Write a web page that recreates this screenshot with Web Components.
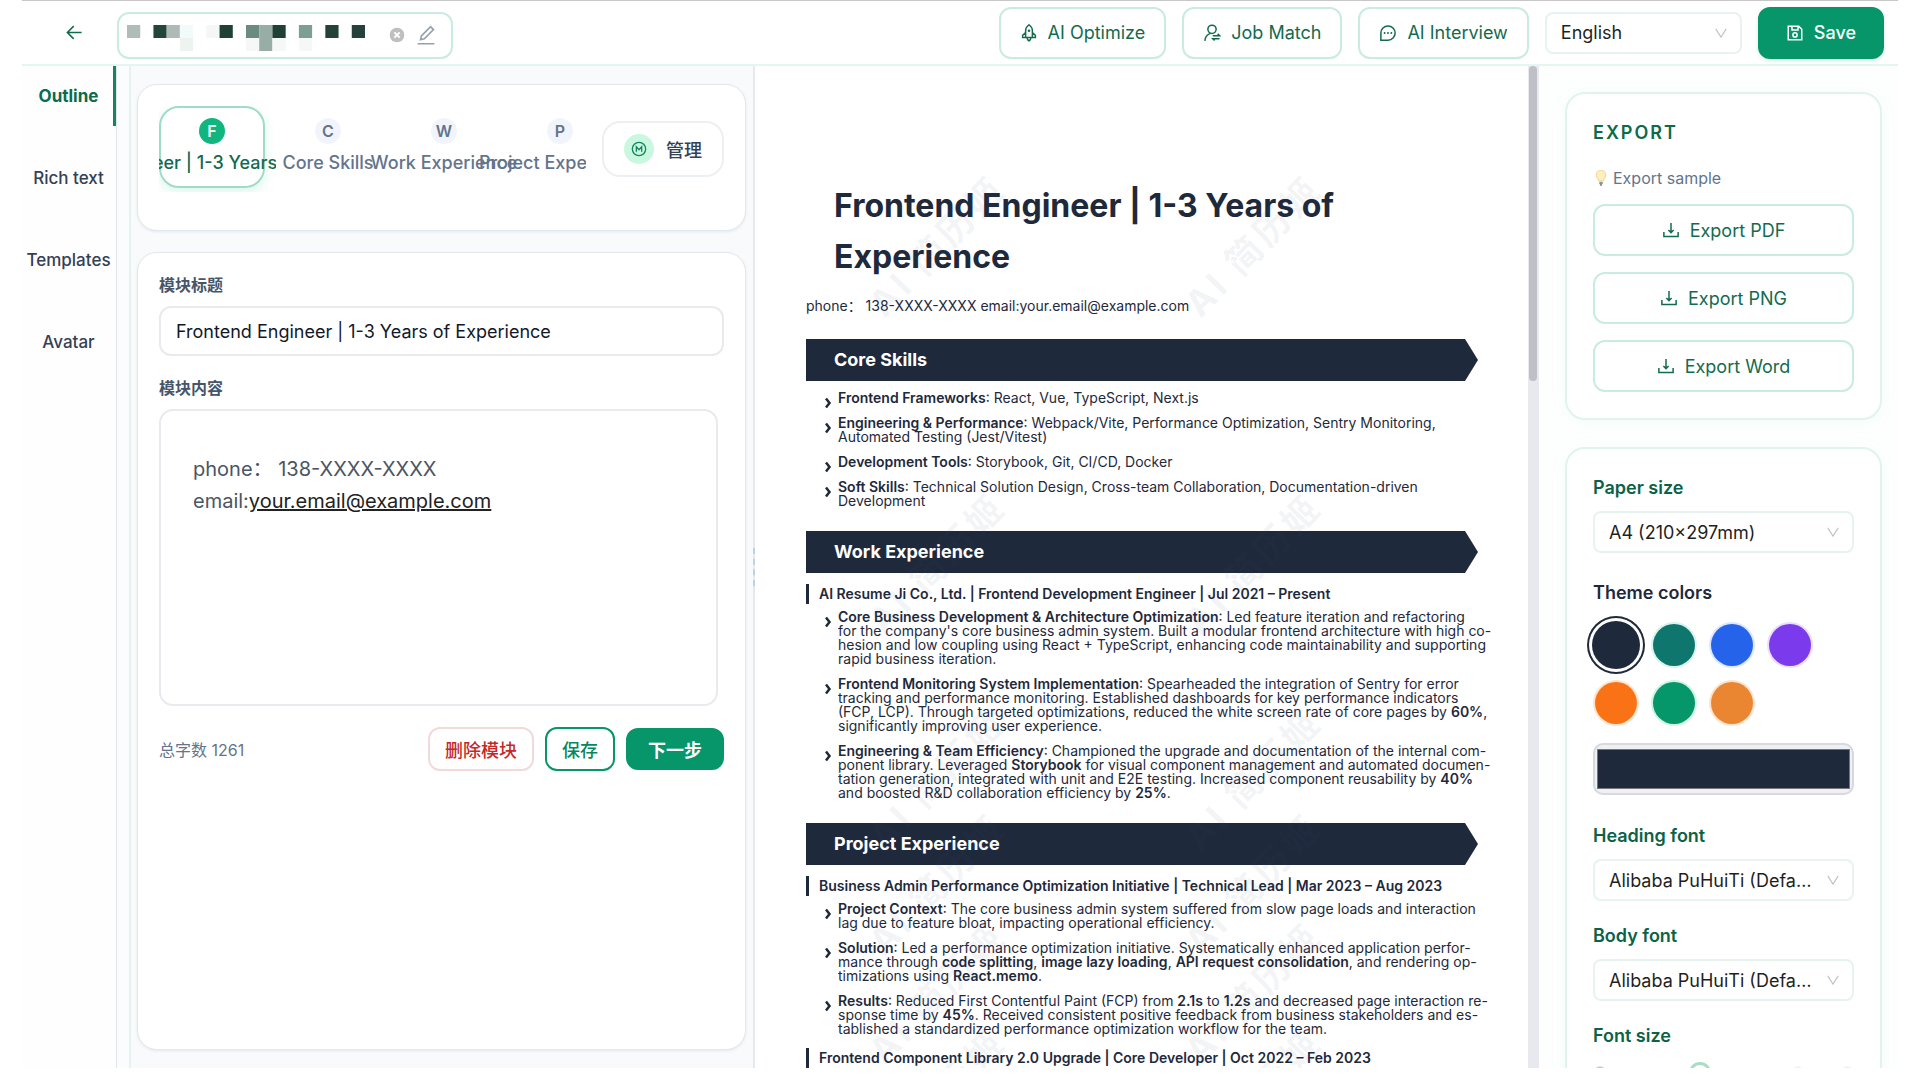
<!DOCTYPE html>
<html lang="en">
<head>
<meta charset="utf-8">
<title>AI Resume Editor</title>
<style>
  body {
    margin: 0;
    background: #fff;
    color: #1e293b;
    font-family: Inter, "Noto Sans CJK SC", sans-serif;
    font-size: 18px;
    overflow: hidden;
  }
</style>
</head>
<body>
<resume-app></resume-app>

<script>
const ICONS = {
  back: '<path d="M21 12H4M11 4l-8 8 8 8"/>',
  rocket: '<path d="M7.500 18V8.500C7.500 5 10 2.500 12 1c2 1.500 4.500 4 4.500 7.500V18zM7.500 11.500 3.500 15v3h17v-3l-4-3.500M9.500 18c0 3 1 3.500 2.500 4.500 1.500-1 2.500-1.500 2.500-4.500"/><circle cx="12" cy="9" r=".8"/>',
  match: '<circle cx="12" cy="7" r="5.500"/><path d="M2.500 22.500c.3-5 3-8.500 7.500-10M13 15.500h9l-2.500-2.500M22 19.500h-9l2.500 2.500"/>',
  chat: '<path d="M2.500 21.500v-9.500a9.500 9.500 0 1 1 9.500 9.500z"/><path stroke-width="2.600" stroke-linecap="round" d="M7.500 12h.01M12 12h.01M16.500 12h.01"/>',
  save: '<path d="M3 3h14l4 4v14H3zM8 3v5h8V3"/><circle cx="12" cy="14.500" r="2.800"/>',
  download: '<path d="M2.500 14.500v6h19v-6M12 2.500V15M8.500 12l3.500 3.500 3.500-3.500"/>',
  edit: '<path d="M2 22.500h20M5.500 17.500l1-4.500L17.500 2l3.500 3.500L10 16.500z"/>',
  clear: '<circle cx="12" cy="12" r="11" fill="currentColor" stroke="none"/><path stroke="#fff" d="M8 8l8 8M16 8l-8 8"/>',
  manage: '<circle cx="12" cy="12" r="10"/><path d="M8 16V8.500l4 4.500 4-4.500V16"/>',
  bulb: '<path fill="#fdf0c0" stroke="#f2dda0" d="M8.500 16c0-3-3.500-4-3.500-8.500a7 7 0 0 1 14 0c0 4.500-3.500 5.500-3.500 8.500z"/><path stroke="#8b8f96" d="M9.500 18.500h5M9.500 20.500h5M10.500 22.500h3"/>',
  down: '<path d="M3 5l9 14 9-14"/>',
  chevron: '<path d="M8 3l7 9-7 9"/>'
};

class AppIcon extends HTMLElement {
  connectedCallback() {
    const size = this.getAttribute('size') || 20;
    const weight = this.getAttribute('weight') || 2;
    this.attachShadow({ mode: 'open' });
    this.shadowRoot.innerHTML = `
      <style>
        :host { display: inline-flex; flex: none; }
        svg { display: block; fill: none; stroke: currentColor; }
      </style>
      <svg width="${size}" height="${size}" viewBox="0 0 24 24" stroke-width="${weight}" aria-hidden="true">${ICONS[this.getAttribute('name')]}</svg>
    `;
  }
}
customElements.define('app-icon', AppIcon);

class ToolButton extends HTMLElement {
  connectedCallback() {
    this.attachShadow({ mode: 'open' });
    this.shadowRoot.innerHTML = `
      <style>
        :host { display: block; }
        button {
          display: flex;
          align-items: center;
          justify-content: center;
          gap: 10px;
          width: 100%;
          height: 52px;
          padding: 0 19px;
          border: 2px solid #c9ecdf;
          border-radius: 12px;
          background: #fff;
          color: #136b4f;
          font: inherit;
          white-space: nowrap;
        }
        :host([primary]) button {
          border-color: #079669;
          background: #079669;
          color: #fff;
          padding: 0 26px;
          font-weight: 500;
          box-shadow: 0 2px 4px rgba(5, 150, 105, .15);
        }
      </style>
      <button type="button"><app-icon name="${this.getAttribute('icon')}" size="18"></app-icon><slot></slot></button>
    `;
  }
}
customElements.define('tool-button', ToolButton);

class SelectField extends HTMLElement {
  connectedCallback() {
    const label = this.getAttribute('label');
    this.attachShadow({ mode: 'open' });
    this.shadowRoot.innerHTML = `
      <style>
        :host { display: block; }
        label { display: block; margin-bottom: 10px; color: #0b6247; font-weight: 600; line-height: 26px; }
        .box { display: grid; align-items: center; }
        .box > * { grid-area: 1 / 1; }
        app-icon { justify-self: end; margin-right: 14px; color: #bfc3c8; pointer-events: none; }
        select {
          appearance: none;
          width: 100%;
          min-width: 0;
          height: 42px;
          padding: 0 38px 0 14px;
          border: 2px solid #e6f3ee;
          border-radius: 8px;
          background: #fff;
          color: #1f1f1f;
          font: inherit;
          text-overflow: ellipsis;
          white-space: nowrap;
          overflow: hidden;
        }
      </style>
      ${label ? `<label for="field">${label}</label>` : ''}
      <div class="box">
        <select id="field" ${label ? '' : 'aria-label="Language"'}><option>${this.getAttribute('value')}</option></select>
        <app-icon name="down" size="14"></app-icon>
      </div>
    `;
  }
}
customElements.define('select-field', SelectField);

class MaskedName extends HTMLElement {
  connectedCallback() {
    // [column, row, colour] on a 13px mosaic
    const cells = [
      [0, 0, '#b0bcb8'], [2, 0, '#24453b'], [3, 0, '#adbab6'], [4, 0, '#f0fbfa'], [4, 1, '#edf3f1'],
      [6, 0, '#f5f6f6'], [7, 0, '#1f4135'], [9, 0, '#6b8a80'], [10, 0, '#97ada5'], [11, 0, '#1f4135'],
      [9, 1, '#f6f7f7'], [10, 1, '#97ada5'], [11, 1, '#f6f7f7'], [13, 0, '#7d9e94'], [13, 1, '#f6f7f7'],
      [15, 0, '#24423a'], [17, 0, '#24423a']
    ];
    this.attachShadow({ mode: 'open' });
    this.shadowRoot.innerHTML = `
      <style>
        :host {
          display: flex;
          align-items: center;
          box-sizing: border-box;
          width: 336px;
          height: 47px;
          padding: 0 8px;
          border: 2px solid #c9ecdf;
          border-radius: 12px;
        }
        .mosaic { flex: none; margin: 6px 24px 0 0; }
        button { display: flex; padding: 0; border: 0; background: none; color: #bfbfbf; }
        button + button { margin-left: 11px; color: #94a0ae; }
      </style>
      <svg class="mosaic" width="238" height="26" viewBox="0 0 234 26" preserveAspectRatio="none" role="img" aria-label="Resume name">
        ${cells.map(([x, y, c]) => `<rect x="${x * 13}" y="${y * 13}" width="13" height="13" fill="${c}"/>`).join('')}
      </svg>
      <button type="button" aria-label="Clear"><app-icon name="clear" size="16" weight="3"></app-icon></button>
      <button type="button" aria-label="Rename"><app-icon name="edit" size="20"></app-icon></button>
    `;
  }
}
customElements.define('masked-name', MaskedName);

class TopBar extends HTMLElement {
  connectedCallback() {
    this.attachShadow({ mode: 'open' });
    this.shadowRoot.innerHTML = `
      <style>
        :host {
          display: flex;
          align-items: center;
          gap: 16px;
          box-sizing: border-box;
          height: 66px;
          padding: 0 14px 0 43px;
          border-top: 1px solid #c9c6c8;
          border-bottom: 2px solid #e3f6ef;
        }
        .back { display: flex; padding: 0; border: 0; background: none; color: #136b4f; }
        masked-name { margin: 5px auto 0 17px; }
        select-field { width: 197px; }
      </style>
      <button class="back" type="button" aria-label="Back"><app-icon name="back" size="19"></app-icon></button>
      <masked-name></masked-name>
      <tool-button icon="rocket">AI Optimize</tool-button>
      <tool-button icon="match">Job Match</tool-button>
      <tool-button icon="chat">AI Interview</tool-button>
      <select-field value="English"></select-field>
      <tool-button primary icon="save">Save</tool-button>
    `;
  }
}
customElements.define('top-bar', TopBar);

class SideNav extends HTMLElement {
  connectedCallback() {
    this.attachShadow({ mode: 'open' });
    this.shadowRoot.innerHTML = `
      <style>
        :host { display: block; border-right: 1px solid #e2e6ea; background: #fefefe; }
        nav { display: flex; flex-direction: column; gap: 22px; }
        a {
          display: flex;
          align-items: center;
          justify-content: center;
          height: 60px;
          border-right: 3px solid transparent;
          padding-left: 2px;
          color: #334155;
          font-size: 17px;
          font-weight: 500;
          text-decoration: none;
        }
        a.active { border-color: #148560; color: #0b6b4b; font-weight: 700; }
      </style>
      <nav>
        <a class="active" href="#outline">Outline</a>
        <a href="#rich-text">Rich text</a>
        <a href="#templates">Templates</a>
        <a href="#avatar">Avatar</a>
      </nav>
    `;
  }
}
customElements.define('side-nav', SideNav);

class PanelCard extends HTMLElement {
  connectedCallback() {
    this.attachShadow({ mode: 'open' });
    this.shadowRoot.innerHTML = `
      <style>
        :host {
          display: block;
          box-sizing: border-box;
          border: 1px solid #e2e8f0;
          border-radius: 20px;
          background: #fff;
          padding: 21px;
          box-shadow: 0 1px 3px rgba(15, 23, 42, .08);
        }
        :host([mint]) { border: 2px solid #e0f4ec; padding: 26px; box-shadow: 0 2px 20px rgba(16, 185, 129, .04); }
      </style>
      <slot></slot>
    `;
  }
}
customElements.define('panel-card', PanelCard);

class ModuleTabs extends HTMLElement {
  connectedCallback() {
    const tabs = [
      ['F', 'Frontend Engineer | 1-3 Years of Experience'],
      ['C', 'Core Skills'],
      ['W', 'Work Experience'],
      ['P', 'Project Experience']
    ];
    this.attachShadow({ mode: 'open' });
    this.shadowRoot.innerHTML = `
      <style>
        :host { display: flex; align-items: center; gap: 16px; height: 86px; margin-bottom: 17px; }
        .strip { display: flex; gap: 10px; flex: 1; min-width: 0; height: 86px; overflow: hidden; }
        .tab {
          display: flex;
          flex: none;
          flex-direction: column;
          align-items: center;
          box-sizing: border-box;
          width: 106px;
          height: 82px;
          padding: 10px 0 0;
          border: 2px solid transparent;
          border-radius: 20px;
          background: none;
          color: #64748b;
          font: inherit;
          font-weight: 500;
        }
        .tab.active { border-color: #9fdcc5; color: #136b4f; box-shadow: 0 4px 12px rgba(16, 185, 129, .15); }
        .letter {
          width: 26px;
          height: 26px;
          border-radius: 50%;
          background: #f1f5fb;
          font-size: 16px;
          font-weight: 600;
          line-height: 26px;
        }
        .active .letter { background: #10b57f; color: #fff; }
        .label { margin-top: 6px; line-height: 26px; white-space: nowrap; }
        .active .label { display: flex; justify-content: center; width: 128px; overflow: hidden; }
        .manage {
          display: flex;
          align-items: center;
          gap: 12px;
          height: 56px;
          padding: 0 20px;
          border: 2px solid #edf0f3;
          border-radius: 18px;
          background: #fff;
          color: #334155;
          font: inherit;
          font-weight: 500;
        }
        .badge { display: flex; padding: 7px; border-radius: 50%; background: #c9f7e0; color: #148560; }
      </style>
      <div class="strip">
        ${tabs.map(([letter, label], i) => `
          <button type="button" class="tab ${i === 0 ? 'active' : ''}">
            <span class="letter">${letter}</span>
            <span class="label">${label}</span>
          </button>`).join('')}
      </div>
      <button type="button" class="manage"><span class="badge"><app-icon name="manage" size="16"></app-icon></span>管理</button>
    `;
  }
}
customElements.define('module-tabs', ModuleTabs);

class ModuleForm extends HTMLElement {
  connectedCallback() {
    this.attachShadow({ mode: 'open' });
    this.shadowRoot.innerHTML = `
      <style>
        :host { display: block; }
        .caption { display: block; color: #475569; font-size: 16px; font-weight: 700; line-height: 22px; margin-bottom: 10px; }
        input {
          display: block;
          box-sizing: border-box;
          width: 100%;
          height: 50px;
          margin-bottom: 21px;
          padding: 0 15px;
          border: 2px solid #e8eaed;
          border-radius: 12px;
          color: #111827;
          font: inherit;
        }
        .editor {
          box-sizing: border-box;
          height: 297px;
          margin-right: 6px;
          padding: 42px 32px;
          border: 2px solid #e8eaed;
          border-radius: 14px;
          color: #4b5563;
          font-size: 20px;
          line-height: 32px;
        }
        .editor p { margin: 0; }
        .editor a { color: #222; }
        .actions { display: flex; align-items: center; gap: 11px; margin-top: 21px; }
        .count { margin-right: auto; color: #64748b; font-size: 16px; }
        button {
          height: 44px;
          padding: 0 15px;
          border: 2px solid #079669;
          border-radius: 12px;
          background: #fff;
          color: #07875f;
          font: inherit;
          font-weight: 500;
        }
        .delete { border-color: #f3dada; color: #c62828; }
        .next { height: 42px; padding: 0 20px; background: #079669; color: #fff; font-weight: 700; }
      </style>
      <label class="caption" for="title">模块标题</label>
      <input id="title" type="text" value="Frontend Engineer | 1-3 Years of Experience">
      <span class="caption" id="content-caption">模块内容</span>
      <div class="editor" contenteditable="true" role="textbox" aria-multiline="true" aria-labelledby="content-caption">
        <p>phone： 138-XXXX-XXXX</p>
        <p>email:<a href="mailto:your.email@example.com">your.email@example.com</a></p>
      </div>
      <div class="actions">
        <span class="count">总字数 1261</span>
        <button type="button" class="delete">删除模块</button>
        <button type="button">保存</button>
        <button type="button" class="next">下一步</button>
      </div>
    `;
  }
}
customElements.define('module-form', ModuleForm);

class EditorPanel extends HTMLElement {
  connectedCallback() {
    this.attachShadow({ mode: 'open' });
    this.shadowRoot.innerHTML = `
      <style>
        :host {
          display: flex;
          flex-direction: column;
          gap: 21px;
          box-sizing: border-box;
          padding: 18px 7px 18px 6px;
          border-left: 2px solid #e3f4f0;
          border-right: 2px solid #e5e9ee;
          background: #f9fafc;
        }
        .form { flex: 1; }
      </style>
      <panel-card><module-tabs></module-tabs></panel-card>
      <panel-card class="form"><module-form></module-form></panel-card>
    `;
  }
}
customElements.define('editor-panel', EditorPanel);

class ResumeSection extends HTMLElement {
  connectedCallback() {
    this.attachShadow({ mode: 'open' });
    this.shadowRoot.innerHTML = `
      <style>
        :host { display: block; margin-top: 23px; }
        h2 {
          margin: 0 0 10px;
          padding-left: 28px;
          background: #1e293b;
          clip-path: polygon(0 0, calc(100% - 13px) 0, 100% 50%, calc(100% - 13px) 100%, 0 100%);
          color: #fff;
          font-size: 18px;
          font-weight: 700;
          line-height: 42px;
        }
      </style>
      <h2>${this.getAttribute('heading')}</h2>
      <slot></slot>
    `;
  }
}
customElements.define('resume-section', ResumeSection);

class ResumeEntry extends HTMLElement {
  connectedCallback() {
    this.attachShadow({ mode: 'open' });
    const heading = this.getAttribute('heading');
    this.shadowRoot.innerHTML = `
      <style>
        :host { display: block; margin-bottom: 12px; }
        :host([heading]) { margin-top: 11px; }
        h3 { margin: 0 0 6px; padding-left: 10px; border-left: 3px solid #1e293b; font-size: 14px; font-weight: 600; line-height: 20px; white-space: nowrap; }
        .items { display: flex; flex-direction: column; gap: 11px; padding-left: 16px; }
      </style>
      ${heading ? `<h3>${heading}</h3>` : ''}
      <div class="items" role="list"><slot></slot></div>
    `;
  }
}
customElements.define('resume-entry', ResumeEntry);

class ResumePoint extends HTMLElement {
  connectedCallback() {
    this.setAttribute('role', 'listitem');
    this.attachShadow({ mode: 'open' });
    this.shadowRoot.innerHTML = `
      <style>
        :host { display: flex; gap: 4px; font-size: 14px; line-height: 14px; white-space: nowrap; }
        app-icon { height: 8px; padding-top: 6px; }
      </style>
      <app-icon name="chevron" size="12" weight="5"></app-icon>
      <div><slot></slot></div>
    `;
  }
}
customElements.define('resume-point', ResumePoint);

class ResumePreview extends HTMLElement {
  connectedCallback() {
    // watermark centres on the paper
    const rows = [178, 496, 711, 816, 925, 1031];
    const marks = rows.flatMap(y => [[180, y], [496, y]]);
    this.attachShadow({ mode: 'open' });
    this.shadowRoot.innerHTML = `
      <style>
        :host { display: flex; overflow: hidden; background: #fff; }
        .paper { position: relative; flex: 1; min-width: 0; box-sizing: border-box; padding: 114px 50px 0 51px; overflow: hidden; }
        h1 { margin: 0 28px 14px; font-size: 32px; font-weight: 700; line-height: 51px; }
        .contact { font-size: 14px; line-height: 20px; margin: 0; }
        b { font-weight: 600; }
        .mark {
          position: absolute;
          transform: translate(-50%, -50%) rotate(-46deg);
          color: rgba(71, 85, 125, .07);
          font-size: 36px;
          font-weight: 700;
          letter-spacing: 4px;
          white-space: nowrap;
          pointer-events: none;
        }
        .scrollbar { flex: none; width: 11px; background: #e8e9ef; }
        .thumb { width: 8px; height: 315px; margin-left: 1px; border-radius: 4px; background: #bdc0c6; }
      </style>
      <div class="paper">
        <h1>Frontend Engineer | 1-3 Years of<br>Experience</h1>
        <p class="contact">phone： 138-XXXX-XXXX email:your.email@example.com</p>
        <resume-section heading="Core Skills">
          <resume-entry>
            <resume-point><b>Frontend Frameworks</b>: React, Vue, TypeScript, Next.js</resume-point>
            <resume-point><b>Engineering &amp; Performance</b>: Webpack/Vite, Performance Optimization, Sentry Monitoring,<br>Automated Testing (Jest/Vitest)</resume-point>
            <resume-point><b>Development Tools</b>: Storybook, Git, CI/CD, Docker</resume-point>
            <resume-point><b>Soft Skills</b>: Technical Solution Design, Cross-team Collaboration, Documentation-driven<br>Development</resume-point>
          </resume-entry>
        </resume-section>
        <resume-section heading="Work Experience">
          <resume-entry heading="AI Resume Ji Co., Ltd. | Frontend Development Engineer | Jul 2021 – Present">
            <resume-point><b>Core Business Development &amp; Architecture Optimization</b>: Led feature iteration and refactoring<br>for the company's core business admin system. Built a modular frontend architecture with high co-<br>hesion and low coupling using React + TypeScript, enhancing code maintainability and supporting<br>rapid business iteration.</resume-point>
            <resume-point><b>Frontend Monitoring System Implementation</b>: Spearheaded the integration of Sentry for error<br>tracking and performance monitoring. Established dashboards for key performance indicators<br>(FCP, LCP). Through targeted optimizations, reduced the white screen rate of core pages by <b>60%</b>,<br>significantly improving user experience.</resume-point>
            <resume-point><b>Engineering &amp; Team Efficiency</b>: Championed the upgrade and documentation of the internal com-<br>ponent library. Leveraged <b>Storybook</b> for visual component management and automated documen-<br>tation generation, integrated with unit and E2E testing. Increased component reusability by <b>40%</b><br>and boosted R&amp;D collaboration efficiency by <b>25%</b>.</resume-point>
          </resume-entry>
        </resume-section>
        <resume-section heading="Project Experience">
          <resume-entry heading="Business Admin Performance Optimization Initiative | Technical Lead | Mar 2023 – Aug 2023">
            <resume-point><b>Project Context</b>: The core business admin system suffered from slow page loads and interaction<br>lag due to feature bloat, impacting operational efficiency.</resume-point>
            <resume-point><b>Solution</b>: Led a performance optimization initiative. Systematically enhanced application perfor-<br>mance through <b>code splitting</b>, <b>image lazy loading</b>, <b>API request consolidation</b>, and rendering op-<br>timizations using <b>React.memo</b>.</resume-point>
            <resume-point><b>Results</b>: Reduced First Contentful Paint (FCP) from <b>2.1s</b> to <b>1.2s</b> and decreased page interaction re-<br>sponse time by <b>45%</b>. Received consistent positive feedback from business stakeholders and es-<br>tablished a standardized performance optimization workflow for the team.</resume-point>
          </resume-entry>
          <resume-entry heading="Frontend Component Library 2.0 Upgrade | Core Developer | Oct 2022 – Feb 2023"></resume-entry>
        </resume-section>
        ${marks.map(([x, y]) => `<span class="mark" style="left:${x}px;top:${y}px">AI 简历姬</span>`).join('')}
      </div>
      <div class="scrollbar"><div class="thumb"></div></div>
    `;
  }
}
customElements.define('resume-preview', ResumePreview);

class ThemePicker extends HTMLElement {
  connectedCallback() {
    const colors = [
      ['#1e293b', '#dbe3ec'], ['#0f766e', '#d7f3ee'], ['#2563eb', '#dbe7fe'], ['#7c3aed', '#e9dffd'],
      ['#f97316', '#fee3cf'], ['#059669', '#cdf5e2'], ['#ea8532', '#fce3cd']
    ];
    this.attachShadow({ mode: 'open' });
    this.shadowRoot.innerHTML = `
      <style>
        :host { display: block; }
        fieldset { display: flex; flex-wrap: wrap; gap: 16px; margin: 0 0 19px; padding: 0 2px; border: 0; min-width: 0; }
        legend { margin: 0 -2px 18px; padding: 0; font-weight: 600; line-height: 26px; }
        .swatch {
          appearance: none;
          width: 42px;
          height: 42px;
          margin: 0;
          border-radius: 50%;
          background: var(--swatch);
          box-shadow: 0 0 0 2px var(--halo);
        }
        .swatch:checked { box-shadow: 0 0 0 3px var(--swatch), 0 0 0 6px #fff, 0 0 0 8px var(--swatch); }
        .custom {
          display: block;
          box-sizing: border-box;
          width: 100%;
          height: 52px;
          padding: 4px 2px;
          border: 2px solid #d5d9e0;
          border-radius: 10px;
          background: #f0f0f2;
        }
        .custom::-webkit-color-swatch-wrapper { padding: 0; }
        .custom::-webkit-color-swatch { border: 1px solid #767676; border-radius: 0; }
      </style>
      <fieldset>
        <legend>Theme colors</legend>
        ${colors.map(([color, halo], i) => `<input class="swatch" type="radio" name="theme" aria-label="${color}" style="--swatch:${color};--halo:${halo}" ${i === 0 ? 'checked' : ''}>`).join('')}
      </fieldset>
      <input class="custom" type="color" value="#1e293b" aria-label="Custom color">
    `;
  }
}
customElements.define('theme-picker', ThemePicker);

class SizeSlider extends HTMLElement {
  connectedCallback() {
    this.attachShadow({ mode: 'open' });
    this.shadowRoot.innerHTML = `
      <style>
        :host { display: block; }
        label { display: block; margin-bottom: 12px; color: #0b6247; font-weight: 600; line-height: 26px; }
        input {
          appearance: none;
          display: block;
          width: 100%;
          height: 24px;
          margin: 0;
          background:
            radial-gradient(circle at 7px 12px, #a7dcc7 6px, transparent 7px),
            radial-gradient(circle at 205px 12px, #edf2f0 6px, transparent 7px),
            radial-gradient(circle at 254px 12px, #edf2f0 6px, transparent 7px);
        }
        input::-webkit-slider-thumb {
          appearance: none;
          box-sizing: border-box;
          width: 22px;
          height: 22px;
          border: 3px solid #a7dcc7;
          border-radius: 50%;
          background: #fff;
        }
      </style>
      <label for="size">Font size</label>
      <input id="size" type="range" min="0" max="10" value="4">
    `;
  }
}
customElements.define('size-slider', SizeSlider);

class SettingsPanel extends HTMLElement {
  connectedCallback() {
    this.attachShadow({ mode: 'open' });
    this.shadowRoot.innerHTML = `
      <style>
        :host {
          display: flex;
          flex-direction: column;
          gap: 27px;
          box-sizing: border-box;
          padding: 26px 16px 0 26px;
          background: #fdfffe;
        }
        panel-card { flex: none; }
        h2 { margin: 0 0 22px; color: #0b6b4b; font-size: 18px; font-weight: 600; line-height: 26px; letter-spacing: 2px; }
        .hint { display: flex; align-items: center; gap: 4px; margin: 0 0 16px; color: #64748b; font-size: 16px; line-height: 20px; }
        .exports { display: flex; flex-direction: column; gap: 16px; }
        theme-picker { margin: 27px 0 28px; }
        .fonts { display: flex; flex-direction: column; gap: 22px; }
      </style>
      <panel-card mint>
        <h2>EXPORT</h2>
        <p class="hint"><app-icon name="bulb" size="16"></app-icon>Export sample</p>
        <div class="exports">
          <tool-button icon="download">Export PDF</tool-button>
          <tool-button icon="download">Export PNG</tool-button>
          <tool-button icon="download">Export Word</tool-button>
        </div>
      </panel-card>
      <panel-card mint>
        <select-field label="Paper size" value="A4 (210×297mm)"></select-field>
        <theme-picker></theme-picker>
        <div class="fonts">
          <select-field label="Heading font" value="Alibaba PuHuiTi (Default)"></select-field>
          <select-field label="Body font" value="Alibaba PuHuiTi (Default)"></select-field>
          <size-slider></size-slider>
        </div>
      </panel-card>
    `;
  }
}
customElements.define('settings-panel', SettingsPanel);

class ResumeApp extends HTMLElement {
  connectedCallback() {
    this.attachShadow({ mode: 'open' });
    this.shadowRoot.innerHTML = `
      <style>
        :host {
          display: grid;
          grid-template-rows: auto minmax(0, 1fr);
          height: calc(100vh - 12px);
          margin: 0 22px 12px;
          overflow: hidden;
        }
        main {
          display: grid;
          grid-template-columns: 95px 12px minmax(0, 626fr) minmax(0, 784fr) 359px;
          min-height: 0;
          overflow: hidden;
        }
        .gutter { background: #fafcfd; }
        settings-panel { overflow: hidden; }
        .split { display: grid; min-width: 0; min-height: 0; }
        .split > * { grid-area: 1 / 1; min-width: 0; min-height: 0; }
        .grip { place-self: center end; height: 38px; border-right: 2px dashed #bcd3e6; }
      </style>
      <top-bar></top-bar>
      <main>
        <side-nav></side-nav>
        <div class="gutter"></div>
        <div class="split"><editor-panel></editor-panel><div class="grip"></div></div>
        <resume-preview></resume-preview>
        <settings-panel></settings-panel>
      </main>
    `;
  }
}
customElements.define('resume-app', ResumeApp);
</script>
</body>
</html>
